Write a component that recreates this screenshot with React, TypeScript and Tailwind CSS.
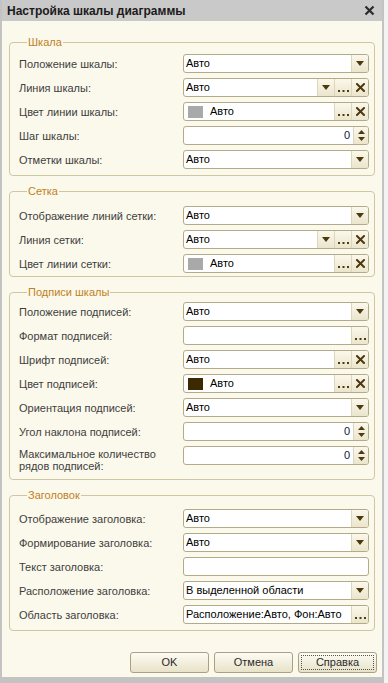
import type { ReactNode } from 'react';

type Kind = 'select' | 'select-edit' | 'color' | 'number' | 'text' | 'dots' | 'font';

type Field = {
  label: ReactNode;
  kind: Kind;
  value?: string;
  swatch?: string;
  tall?: boolean;
};

type GroupDef = { title: string; pt: string; pb: string; fields: Field[] };

const GROUPS: GroupDef[] = [
  {
    title: 'Шкала',
    pt: 'pt-[5px]',
    pb: 'pb-[6px]',
    fields: [
      { label: 'Положение шкалы:', kind: 'select', value: 'Авто' },
      { label: 'Линия шкалы:', kind: 'select-edit', value: 'Авто' },
      { label: 'Цвет линии шкалы:', kind: 'color', value: 'Авто', swatch: '#a9a9a9' },
      { label: 'Шаг шкалы:', kind: 'number', value: '0' },
      { label: 'Отметки шкалы:', kind: 'select', value: 'Авто' },
    ],
  },
  {
    title: 'Сетка',
    pt: 'pt-[8px]',
    pb: 'pb-[3px]',
    fields: [
      { label: 'Отображение линий сетки:', kind: 'select', value: 'Авто' },
      { label: 'Линия сетки:', kind: 'select-edit', value: 'Авто' },
      { label: 'Цвет линии сетки:', kind: 'color', value: 'Авто', swatch: '#a9a9a9' },
    ],
  },
  {
    title: 'Подписи шкалы',
    pt: 'pt-[3px]',
    pb: 'pb-[7px]',
    fields: [
      { label: 'Положение подписей:', kind: 'select', value: 'Авто' },
      { label: 'Формат подписей:', kind: 'dots', value: '' },
      { label: 'Шрифт подписей:', kind: 'font', value: 'Авто' },
      { label: 'Цвет подписей:', kind: 'color', value: 'Авто', swatch: '#3d2900' },
      { label: 'Ориентация подписей:', kind: 'select', value: 'Авто' },
      { label: 'Угол наклона подписей:', kind: 'number', value: '0' },
      {
        label: (
          <>
            Максимальное количество
            <br />
            рядов подписей:
          </>
        ),
        kind: 'number',
        value: '0',
        tall: true,
      },
    ],
  },
  {
    title: 'Заголовок',
    pt: 'pt-[7px]',
    pb: 'pb-[6px]',
    fields: [
      { label: 'Отображение заголовка:', kind: 'select', value: 'Авто' },
      { label: 'Формирование заголовка:', kind: 'select', value: 'Авто' },
      { label: 'Текст заголовка:', kind: 'text', value: '' },
      { label: 'Расположение заголовка:', kind: 'select', value: 'В выделенной области' },
      { label: 'Область заголовка:', kind: 'dots', value: 'Расположение:Авто, Фон:Авто' },
    ],
  },
];

/* small field buttons — brown glyphs on a cream gradient */
const btnBase = 'flex h-full w-[17px] border-l border-[#ddd6bc] bg-gradient-to-b from-[#fbf8ec] to-[#ebe5cc]';

function DropBtn() {
  return (
    <span className={btnBase + ' items-center justify-center'}>
      <svg width="8" height="5" viewBox="0 0 8 5">
        <path d="M0 0h8L4 5z" fill="#4d3a0c" />
      </svg>
    </span>
  );
}

function DotsBtn() {
  return (
    <span className={btnBase + ' items-end justify-center pb-[4px]'}>
      <svg width="11" height="2" viewBox="0 0 11 2">
        <rect x="0" y="0" width="2" height="2" fill="#4d3a0c" />
        <rect x="4.5" y="0" width="2" height="2" fill="#4d3a0c" />
        <rect x="9" y="0" width="2" height="2" fill="#4d3a0c" />
      </svg>
    </span>
  );
}

function ClearBtn() {
  return (
    <span className={btnBase + ' items-center justify-center'}>
      <svg width="9" height="9" viewBox="0 0 9 9">
        <path d="M1 1l7 7M8 1L1 8" stroke="#4d3a0c" strokeWidth="2" strokeLinecap="square" />
      </svg>
    </span>
  );
}

function SpinBtn() {
  return (
    <span className="flex h-full w-[15px] flex-col items-center justify-center gap-[3px] border-l border-[#ddd6bc] bg-gradient-to-b from-[#fbf8ec] to-[#ebe5cc]">
      <svg width="7" height="4" viewBox="0 0 7 4">
        <path d="M3.5 0L7 4H0z" fill="#4d3a0c" />
      </svg>
      <svg width="7" height="4" viewBox="0 0 7 4">
        <path d="M0 0h7L3.5 4z" fill="#4d3a0c" />
      </svg>
    </span>
  );
}

function Input({ f }: { f: Field }) {
  return (
    <div className="flex h-[19px] flex-1 items-stretch overflow-hidden rounded-[3px] border border-[#b3aa88] bg-white">
      {f.swatch && (
        <span className="ml-[4px] mr-[5px] self-center">
          <span className="block h-[12px] w-[15px]" style={{ background: f.swatch }} />
        </span>
      )}
      <span
        className={
          'flex flex-1 items-center truncate px-[2px] text-[11px] ' +
          (f.kind === 'number' ? 'justify-end pr-[3px] text-[#0c1a3a]' : 'text-black')
        }
      >
        {f.value}
      </span>
      {(f.kind === 'select' || f.kind === 'select-edit') && <DropBtn />}
      {(f.kind === 'select-edit' || f.kind === 'color' || f.kind === 'font' || f.kind === 'dots') && <DotsBtn />}
      {(f.kind === 'select-edit' || f.kind === 'color' || f.kind === 'font') && <ClearBtn />}
      {f.kind === 'number' && <SpinBtn />}
    </div>
  );
}

function Group({ g }: { g: GroupDef }) {
  return (
    <fieldset className={'mx-[7px] rounded-[4px] border border-[#cfc6a2] pl-[9px] pr-[5px] ' + g.pt + ' ' + g.pb}>
      <legend className="ml-[8px] px-[1px] text-[11px] leading-[14px] text-[#c27f1c]">{g.title}</legend>
      <div className="flex flex-col gap-[5px]">
        {g.fields.map((f, i) => (
          <div key={i} className={'flex ' + (f.tall ? 'items-start' : 'items-center')}>
            <div className={'w-[164px] text-[11px] text-[#3e3e3e] ' + (f.tall ? 'pt-[2px] leading-[12px]' : 'leading-[14px]')}>
              {f.label}
            </div>
            <Input f={f} />
          </div>
        ))}
      </div>
    </fieldset>
  );
}

function Btn({ children, focused }: { children: ReactNode; focused?: boolean }) {
  return (
    <button
      type="button"
      className="h-[21px] w-[79px] rounded-[3px] border border-[#aaa184] bg-gradient-to-b from-[#fdfcf4] to-[#e8e2c8] p-[2px] text-[11px] text-[#2a2a2a]"
    >
      <span className={'flex h-full w-full items-center justify-center ' + (focused ? 'border border-dotted border-[#555]' : '')}>
        {children}
      </span>
    </button>
  );
}

export default function App() {
  return (
    <div className="flex h-[683px] w-[388px] bg-[#f3f3f3] font-['Liberation_Sans',Arial,sans-serif]">
      <div className="flex h-full w-[384px] flex-col border-b-[6px] border-l-2 border-r-2 border-[#c3c3c3] bg-[#fbf9ec]">
        {/* title bar */}
        <div className="flex h-[21px] shrink-0 items-center justify-between bg-[#c9c9c9] pl-[5px] pr-[7px]">
          <span className="text-[12px] font-bold text-[#1b1b1b]">Настройка шкалы диаграммы</span>
          <svg width="11" height="11" viewBox="0 0 11 11">
            <path d="M1.5 1.5l8 8M9.5 1.5l-8 8" stroke="#2a2a2a" strokeWidth="2.2" />
          </svg>
        </div>

        <div className="flex flex-col gap-[8px] pt-[14px]">
          {GROUPS.map((g) => (
            <Group key={g.title} g={g} />
          ))}
        </div>

        <div className="mt-auto flex justify-end gap-[5px] pb-[4px] pr-[5px]">
          <Btn>OK</Btn>
          <Btn>Отмена</Btn>
          <Btn focused>Справка</Btn>
        </div>
      </div>
    </div>
  );
}
